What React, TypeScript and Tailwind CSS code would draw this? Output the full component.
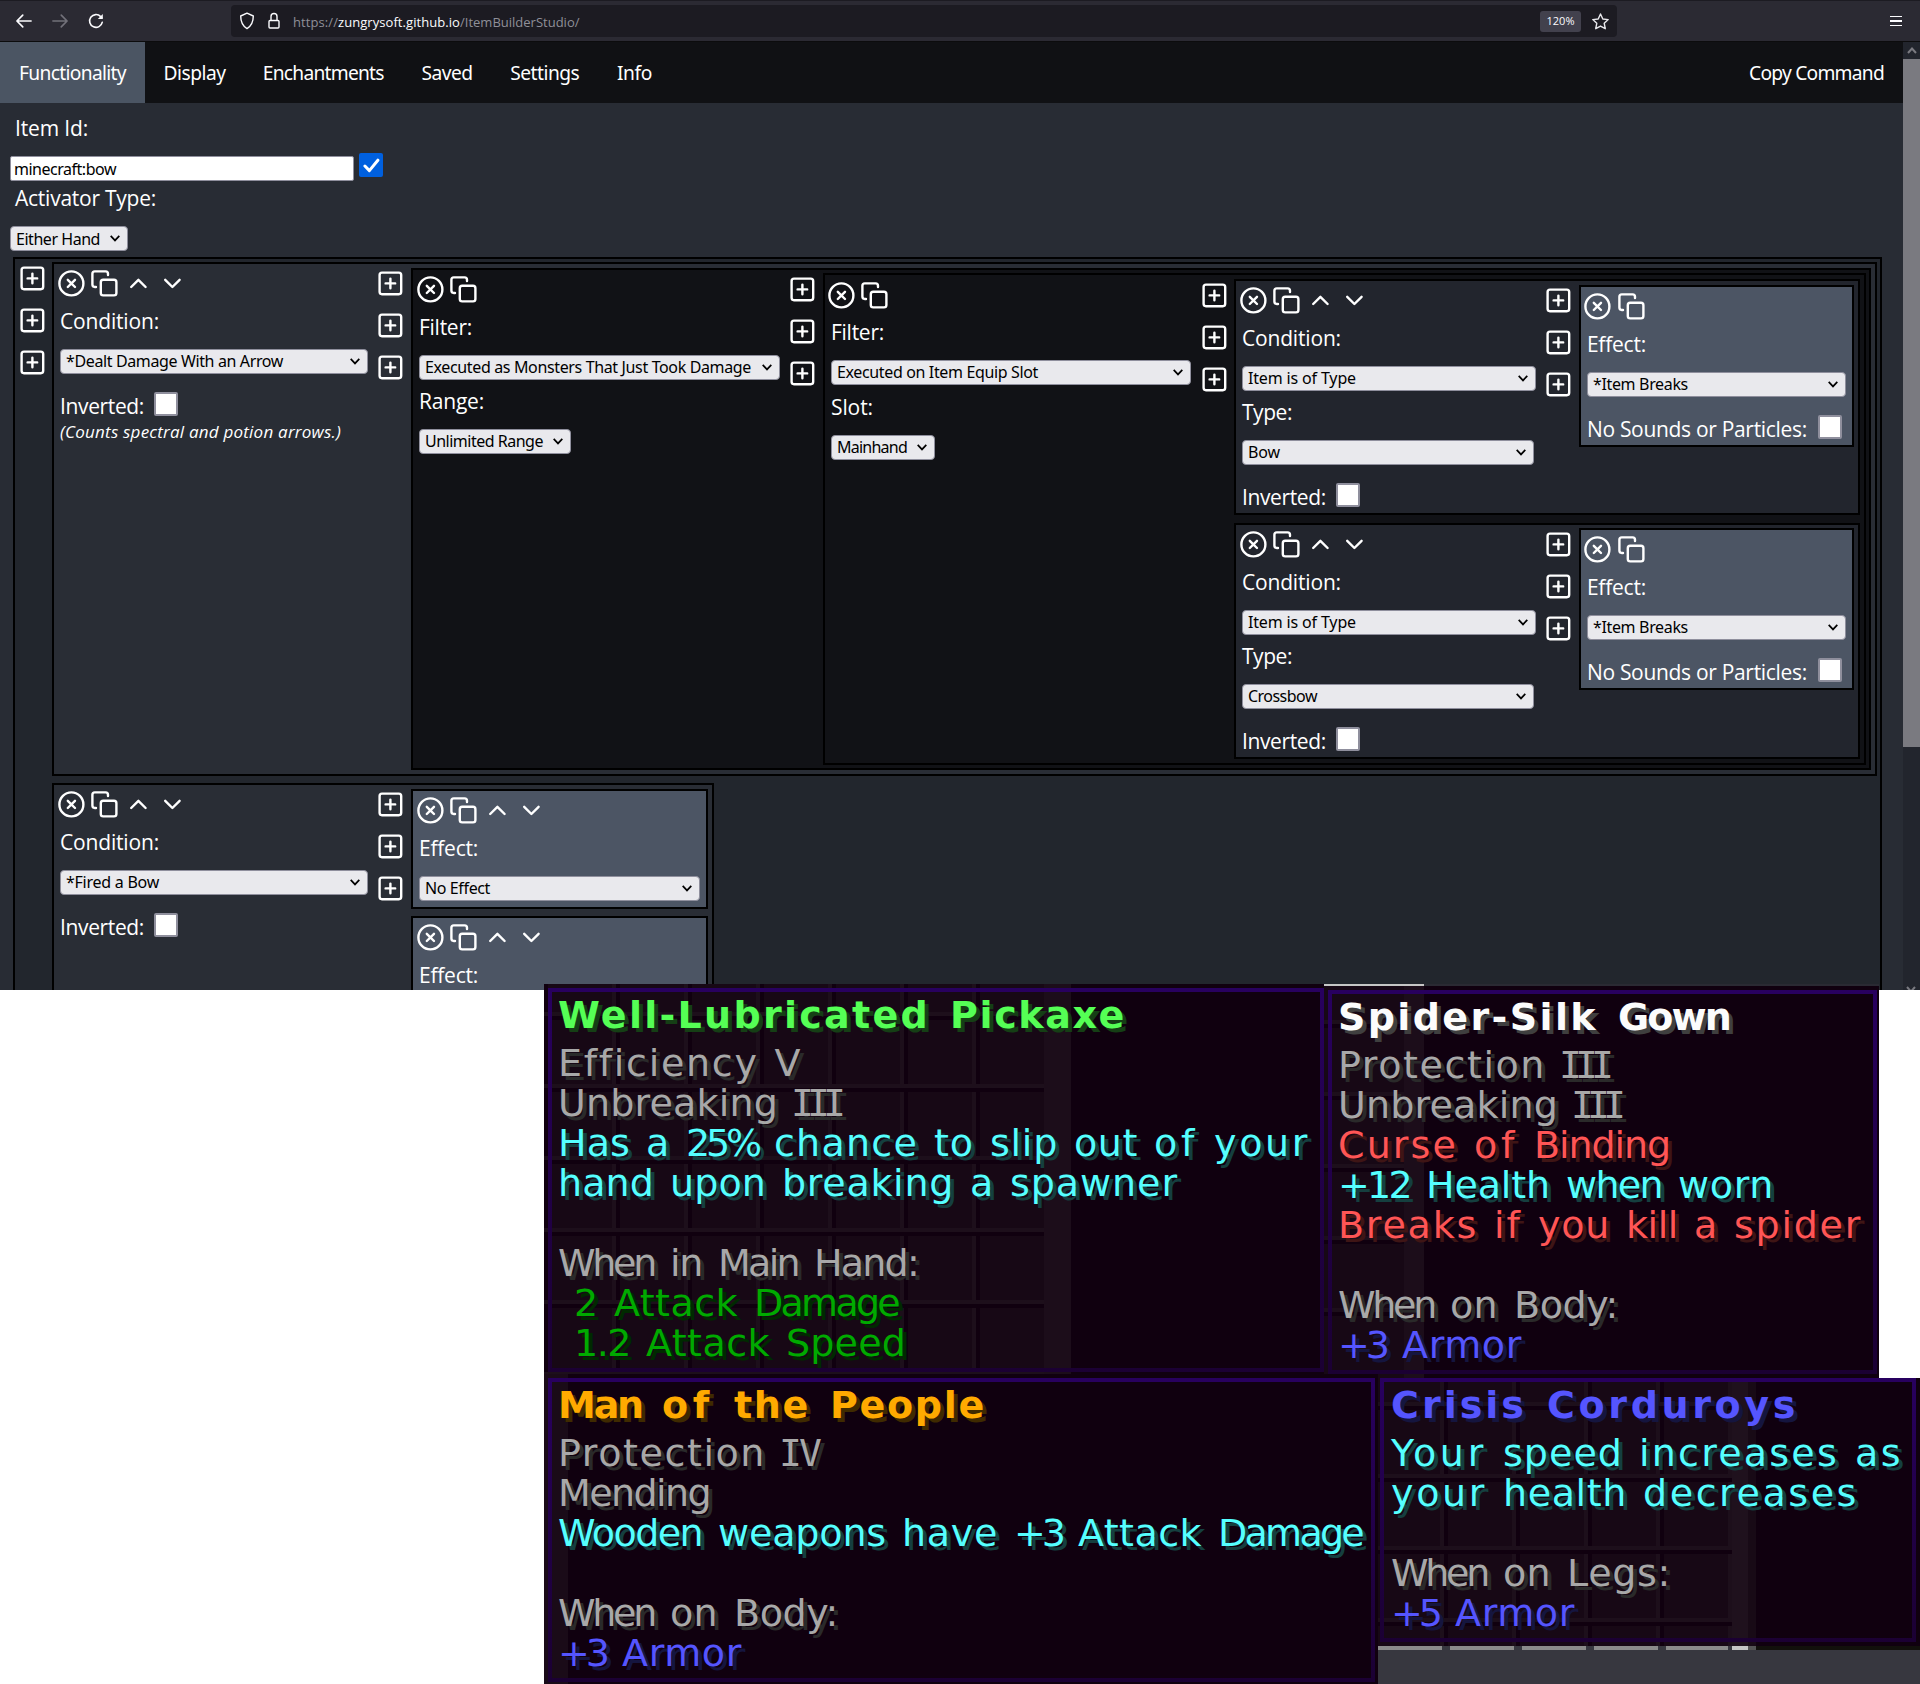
import React, { useLayoutEffect, useRef, useState } from "react";

/* Text set to an exact advance width by adjusting its tracking. */
function Fit({ w, children, className = "" }: { w: number; children: string; className?: string }) {
  const ref = useRef<HTMLSpanElement>(null);
  const [spacing, setSpacing] = useState(0);
  useLayoutEffect(() => {
    const el = ref.current;
    if (!el) return;
    const prev = el.style.letterSpacing;
    el.style.letterSpacing = "0px";
    const natural = el.getBoundingClientRect().width;
    el.style.letterSpacing = prev;
    setSpacing((w - natural) / Math.max(1, children.length));
  }, [w, children]);
  return (
    <span ref={ref} className={"inline-block shrink-0 whitespace-pre " + className} style={{ letterSpacing: spacing + "px" }}>
      {children}
    </span>
  );
}

function Icon({ children }: { children: React.ReactNode }) {
  return (
    <svg
      viewBox="0 0 24 24"
      className="block h-[28.8px] w-[28.8px] shrink-0"
      fill="none"
      stroke="#fff"
      strokeWidth="2"
      strokeLinecap="round"
      strokeLinejoin="round"
    >
      {children}
    </svg>
  );
}

const Close = () => (
  <Icon>
    <circle cx="12" cy="12" r="10" />
    <path d="M15 9l-6 6M9 9l6 6" />
  </Icon>
);
const Copy = () => (
  <Icon>
    <rect x="9" y="9" width="13" height="13" rx="2" />
    <path d="M5 15H4a2 2 0 0 1-2-2V4a2 2 0 0 1 2-2h9a2 2 0 0 1 2 2v1" />
  </Icon>
);
const Up = () => (
  <Icon>
    <path d="M18 15l-6-6-6 6" />
  </Icon>
);
const Down = () => (
  <Icon>
    <path d="M6 9l6 6 6-6" />
  </Icon>
);
const Plus = () => (
  <Icon>
    <rect x="3" y="3" width="18" height="18" rx="2" />
    <path d="M12 8v8M8 12h8" />
  </Icon>
);

function PlusColumn({ className = "pt-[4.6px]" }: { className?: string }) {
  return (
    <div className={"flex shrink-0 flex-col gap-[13.2px] " + className}>
      <Plus />
      <Plus />
      <Plus />
    </div>
  );
}

function Tools({ arrows = false, className = "pl-[2.6px] pt-[4.8px]" }: { arrows?: boolean; className?: string }) {
  return (
    <div className={"flex gap-[4.9px] " + className}>
      <Close />
      <Copy />
      {arrows && <Up />}
      {arrows && <Down />}
    </div>
  );
}

function Label({ w, children, className = "mt-[9px]" }: { w: number; children: string; className?: string }) {
  return (
    <div className={"ml-[6px] flex h-6 shrink-0 font-['Open_Sans',sans-serif] text-[21px] leading-6 text-white " + className}>
      <Fit w={w}>{children}</Fit>
    </div>
  );
}

function Select({ w, tw, children, className = "ml-[6px] mt-4" }: { w: number; tw: number; children: string; className?: string }) {
  return (
    <div
      className={
        "flex h-[25px] items-center justify-between rounded-[4px] border border-[#8f8f9d] bg-[#e9e9ed] pl-[5px] pr-[7px] font-['Noto_Sans',sans-serif] text-[16px] leading-[23px] text-black " +
        className
      }
      style={{ width: w }}
    >
      <Fit w={tw} className="pt-px">{children}</Fit>
      <svg viewBox="0 0 10 7" className="h-[7px] w-[10px] shrink-0" fill="none" stroke="#000" strokeWidth="1.7">
        <path d="M.7 .9L5 5.4 9.3 .9" />
      </svg>
    </div>
  );
}

function Check({ w, gap, children }: { w: number; gap: string; children: string }) {
  return (
    <div className={"ml-[6px] mt-[18px] flex h-6 " + gap}>
      <div className="mt-[2px] font-['Open_Sans',sans-serif] text-[21px] leading-6 text-white">
        <Fit w={w}>{children}</Fit>
      </div>
      <div className="h-6 w-6 shrink-0 rounded-[2px] border-2 border-[#8f8f9d] bg-white" />
    </div>
  );
}

function ItemCondition({ type, tw, className }: { type: string; tw: number; className: string }) {
  return (
    <div className="flex h-[236px] border-2 border-black bg-[#22252d]">
      <div className="w-[307.6px] shrink-0">
        <Tools arrows />
        <Label w={99} className="mt-[11.4px]">Condition:</Label>
        <Select w={294} tw={108}>Item is of Type</Select>
        <Label w={50}>Type:</Label>
        <Select w={292} tw={tw}>{type}</Select>
        <Check w={84} gap="gap-[10px]">Inverted:</Check>
      </div>
      <PlusColumn className="w-[35.4px] pt-[4.6px]" />
      <div className={"w-[275px] shrink-0 " + className}>
        <div className="h-[162px] border-2 border-black bg-[#4c5564]">
          <Tools className="pl-[2px] pt-[4.8px]" />
          <Label w={59} className="mt-[11.4px]">Effect:</Label>
          <Select w={259} tw={95}>*Item Breaks</Select>
          <Check w={220} gap="gap-[11px]">No Sounds or Particles:</Check>
        </div>
      </div>
    </div>
  );
}

function Nav() {
  const items: [string, number, string][] = [
    ["Functionality", 107, "w-[145px] bg-[#4b5563]"],
    ["Display", 62, "w-[99px]"],
    ["Enchantments", 121, "w-[158.5px]"],
    ["Saved", 51, "w-[89px]"],
    ["Settings", 69, "w-[106.5px]"],
    ["Info", 35, "w-[73px]"],
  ];
  return (
    <nav className="flex h-[61px] shrink-0 bg-[#101114] font-['Noto_Sans',sans-serif] text-[19.2px] text-white">
      {items.map(([t, w, c]) => (
        <div key={t} className={"flex items-center justify-center pt-[2px] " + c}>
          <Fit w={w}>{t}</Fit>
        </div>
      ))}
      <div className="ml-auto flex items-center pr-[19px] pt-[2px]">
        <Fit w={135}>Copy Command</Fit>
      </div>
    </nav>
  );
}

function BrowserBar() {
  return (
    <div className="flex h-[42px] shrink-0 items-center border-b border-t border-b-[#0c0c0d] border-t-[#1c1b22] bg-[#2b2a33]">
      <svg viewBox="0 0 24 24" className="ml-[14px] h-5 w-5" fill="none" stroke="#fbfbfe" strokeWidth="2" strokeLinecap="round" strokeLinejoin="round">
        <path d="M20.5 12H4M10.5 5L3.5 12l7 7" />
      </svg>
      <svg viewBox="0 0 24 24" className="ml-4 h-5 w-5" fill="none" stroke="#72717a" strokeWidth="2" strokeLinecap="round" strokeLinejoin="round">
        <path d="M3.5 12H20M13.5 5l7 7-7 7" />
      </svg>
      <svg viewBox="0 0 18 18" className="ml-[17px] h-[18px] w-[18px]" fill="none" stroke="#fbfbfe" strokeWidth="1.6" strokeLinecap="round">
        <path d="M15.3 10.2a6.4 6.4 0 1 1-1.6-5.6l1 1" />
        <path d="M15.8 2v5h-5z" fill="#fbfbfe" stroke="none" />
      </svg>
      <div className="ml-[126px] flex h-8 w-[1386px] items-center rounded-[4px] bg-[#1c1b22] font-['Open_Sans',sans-serif] text-[13px]">
        <svg viewBox="0 0 16 18" className="ml-[8px] h-[18px] w-4" fill="none" stroke="#fbfbfe" strokeWidth="1.4" strokeLinejoin="round">
          <path d="M8 1.2L14.3 4c0 5.500-1.600 9.800-6.300 12.600C3.300 13.800 1.700 9.500 1.700 4z" />
        </svg>
        <svg viewBox="0 0 12 18" className="ml-[13px] h-[18px] w-3" fill="none" stroke="#fbfbfe" strokeWidth="1.4" strokeLinejoin="round">
          <rect x="1" y="8.500" width="10" height="7.500" rx="1" />
          <path d="M3 8.500V4.500a3 3 0 0 1 6 0v4" />
        </svg>
        <div className="ml-[13px] flex pt-[3px] text-[#8f8f98]">
          <Fit w={45}>https://</Fit>
          <Fit w={122} className="text-[#fbfbfe]">zungrysoft.github.io</Fit>
          <Fit w={119.5}>/ItemBuilderStudio/</Fit>
        </div>
        <div className="ml-auto flex h-[21px] w-[41px] items-center justify-center rounded-[3px] bg-[#42414d] pt-px text-[11px] text-[#fbfbfe]">
          <Fit w={28}>120%</Fit>
        </div>
        <svg viewBox="0 0 24 24" className="ml-[10px] mr-[7px] h-[19px] w-[19px]" fill="none" stroke="#e8e8ec" strokeWidth="1.800" strokeLinejoin="round">
          <path d="M12 2.500l2.900 6.300 6.800.8-5 4.700 1.300 6.800L12 17.700l-6 3.400 1.300-6.800-5-4.700 6.800-.8z" />
        </svg>
      </div>
      <div className="ml-auto mr-[18px] flex w-3 flex-col gap-[3px]">
        <div className="h-[1.5px] bg-[#fbfbfe]" />
        <div className="h-[1.5px] bg-[#fbfbfe]" />
        <div className="h-[1.5px] bg-[#fbfbfe]" />
      </div>
    </div>
  );
}

function Workspace() {
  return (
    <div className="ml-[13px] mt-[6px] flex h-[760px] w-[1869px] shrink-0 border-2 border-black bg-[#22262d]">
      <PlusColumn className="w-[37px] pl-[2.600px] pt-[4.6px]" />
      <div className="flex w-[1825px] shrink-0 flex-col gap-[7px] pt-[3px]">
        <div className="flex h-[514px] shrink-0 border-2 border-black bg-[#292d35]">
          <div className="w-[321.600px] shrink-0">
            <Tools arrows />
            <Label w={99} className="mt-[11.4px]">Condition:</Label>
            <Select w={308} tw={217}>*Dealt Damage With an Arrow</Select>
            <Check w={84} gap="gap-[10px]">Inverted:</Check>
            <div className="ml-[6px] mt-[4px] h-6 font-['Open_Sans',sans-serif] text-[17px] italic leading-6 text-white">
              <Fit w={281}>(Counts spectral and potion arrows.)</Fit>
            </div>
          </div>
          <PlusColumn className="w-[35.4px] pt-[4.6px]" />
          <div className="w-[1460px] shrink-0 pt-1">
            <div className="flex h-[502px] border-2 border-black bg-[#111216]">
              <div className="w-[374.600px] shrink-0">
                <Tools />
                <Label w={53} className="mt-[11.4px]">Filter:</Label>
                <Select w={361} tw={326}>Executed as Monsters That Just Took Damage</Select>
                <Label w={65}>Range:</Label>
                <Select w={152} tw={118}>Unlimited Range</Select>
              </div>
              <PlusColumn className="w-[35.4px] pt-[4.6px]" />
              <div className="w-[1043px] shrink-0 pt-[3px]">
                <div className="flex h-[492px] border-2 border-black bg-[#111216]">
                  <div className="w-[374.600px] shrink-0">
                    <Tools className="pl-[1.8px] pt-[5.6px]" />
                    <Label w={53} className="mt-[10.6px]">Filter:</Label>
                    <Select w={360} tw={201}>Executed on Item Equip Slot</Select>
                    <Label w={42} className="mt-[10px]">Slot:</Label>
                    <Select w={104} tw={70}>Mainhand</Select>
                  </div>
                  <PlusColumn className="w-[34.4px] pt-[5.6px]" />
                  <div className="flex w-[626px] shrink-0 flex-col gap-2 pt-1">
                    <ItemCondition type="Bow" tw={32} className="pt-1" />
                    <ItemCondition type="Crossbow" tw={69} className="pt-[3px]" />
                  </div>
                </div>
              </div>
            </div>
          </div>
        </div>
        <div className="flex h-[400px] w-[662px] shrink-0 border-2 border-black bg-[#292d35]">
          <div className="w-[321.600px] shrink-0">
            <Tools arrows />
            <Label w={99} className="mt-[11.4px]">Condition:</Label>
            <Select w={308} tw={93}>*Fired a Bow</Select>
            <Check w={84} gap="gap-[10px]">Inverted:</Check>
          </div>
          <PlusColumn className="w-[35.4px] pt-[4.6px]" />
          <div className="flex w-[297px] shrink-0 flex-col gap-[7px] pt-1">
            <div className="h-[120px] border-2 border-black bg-[#4c5564]">
              <Tools arrows />
              <Label w={59} className="mt-[11.4px]">Effect:</Label>
              <Select w={281} tw={65}>No Effect</Select>
            </div>
            <div className="h-[120px] border-2 border-black bg-[#4c5564]">
              <Tools arrows />
              <Label w={59} className="mt-[11.4px]">Effect:</Label>
            </div>
          </div>
        </div>
      </div>
    </div>
  );
}

/* Glyph advances of the game's bitmap font, in font pixels. */
const ADVANCE: Record<string, number> = { i: 2, l: 3, t: 4, f: 5, k: 5, I: 4, " ": 4, ".": 2, ":": 2 };
const PX = 4;

function GameLine({ text, tone, bold = false }: { text: string; tone: string; bold?: boolean }) {
  const parts = text.split(/( +)/).filter((p) => p.length > 0);
  return (
    <div
      className={
        "flex h-10 whitespace-pre font-['DejaVu_Sans',sans-serif] leading-10 " +
        (bold ? "mb-2 text-[38px] font-bold " : "text-[38px] ") +
        tone
      }
    >
      {parts.map((p, i) => {
        const w = [...p].reduce((s, ch) => s + ((ADVANCE[ch] ?? 6) + (bold ? 1 : 0)) * PX, 0);
        return (
          <Fit key={i} w={w} className={/^I+V?$/.test(p) ? "-ml-[3px] mr-[3px] font-['DejaVu_Sans_Mono',monospace]" : ""}>
            {p}
          </Fit>
        );
      })}
    </div>
  );
}

const TONE = {
  green: "text-[#55ff55] [text-shadow:4px_4px_0_#153f15]",
  gray: "text-[#a8a8a8] [text-shadow:4px_4px_0_#2a2a2a]",
  aqua: "text-[#55ffff] [text-shadow:4px_4px_0_#153f3f]",
  dark: "text-[#00aa00] [text-shadow:4px_4px_0_#002a00]",
  red: "text-[#ff5555] [text-shadow:4px_4px_0_#3f1515]",
  blue: "text-[#5555ff] [text-shadow:4px_4px_0_#15153f]",
  gold: "text-[#ffaa00] [text-shadow:4px_4px_0_#3f2a00]",
  white: "text-[#fcfcfc] [text-shadow:4px_4px_0_#3f3f3f]",
};
type Line = [string, keyof typeof TONE];

function Tooltip({
  lines,
  frame,
  backdrop,
  origin = "left-[14px] top-[11px]",
}: {
  lines: Line[];
  frame: string;
  backdrop: React.ReactNode;
  origin?: string;
}) {
  return (
    <div className={"relative shrink-0 overflow-hidden bg-[#10000f] " + frame}>
      {backdrop}
      <div className="relative h-full bg-linear-to-b from-[#28005f] to-[#1b0033] p-1 [mask:linear-gradient(#000_0_0)_top/100%_4px_no-repeat,linear-gradient(#000_0_0)_bottom/100%_4px_no-repeat,linear-gradient(#000_0_0)_left/4px_100%_no-repeat,linear-gradient(#000_0_0)_right/4px_100%_no-repeat]" />
      <div className={"absolute " + origin}>
        {lines.map(([t, c], i) => (
          <GameLine key={i} text={t} tone={TONE[c]} bold={i === 0} />
        ))}
      </div>
    </div>
  );
}

export default function App() {
  return (
    <div className="h-[1684px] w-[1920px] overflow-hidden bg-white">
      <div className="flex h-[990px] flex-col overflow-hidden bg-[#282c34]">
        <BrowserBar />
        <div className="flex h-[948px] shrink-0">
          <main className="flex w-[1903px] shrink-0 flex-col overflow-hidden">
            <Nav />
            <Label w={73} className="ml-[15px] mt-[13px]">Item Id:</Label>
            <div className="ml-[10px] mt-[13px] flex h-7 shrink-0 items-start gap-[5px]">
              <div className="mt-[3px] flex h-[25px] w-[344px] items-center rounded-[2px] border border-[#8f8f9d] bg-white pl-[3px] pt-px font-['Noto_Sans',sans-serif] text-[16px] leading-[23px] text-black">
                <Fit w={102}>minecraft:bow</Fit>
              </div>
              <div className="flex h-6 w-6 items-center justify-center rounded-[2px] bg-[#0060df]">
                <svg viewBox="0 0 16 14" className="h-[15px] w-[17px]" fill="none" stroke="#fff" strokeWidth="2.800" strokeLinecap="round" strokeLinejoin="round">
                  <path d="M1.800 7.500L6 11.800 14 2" />
                </svg>
              </div>
            </div>
            <Label w={141} className="ml-[15px] mt-[5px]">Activator Type:</Label>
            <Select w={118} tw={84} className="ml-[10px] mt-4 shrink-0">Either Hand</Select>
            <Workspace />
          </main>
          <aside className="flex w-[17px] flex-col bg-[#22252d]">
            <div className="flex h-[17px] items-center justify-center">
              <svg viewBox="0 0 10 7" className="h-[7px] w-[10px]" fill="none" stroke="#7a7a80" strokeWidth="2">
                <path d="M1 6l4-4.500L9 6" />
              </svg>
            </div>
            <div className="h-[688px] bg-[#7a7a80]" />
            <svg viewBox="0 0 10 7" className="ml-[3px] mt-auto -mb-[3px] h-[7px] w-[10px]" fill="none" stroke="#7a7a80" strokeWidth="2">
              <path d="M1 1l4 4.500L9 1" />
            </svg>
          </aside>
        </div>
      </div>

      <section className="relative -mt-[6px] ml-[544px] flex h-[392px] w-[1376px] items-start">
        <Tooltip
          frame="w-[780px] h-[392px] pl-1 pt-1 pb-1"
          backdrop={
            <div className="absolute inset-y-0 left-0 flex">
              <div className="w-[500px] bg-[#170815] [background-image:linear-gradient(90deg,#1d0f1b_4px,#10000f_4px_8px,transparent_8px)] [background-position:-4px_0] [background-size:72px_100%]">
                <div className="h-full [background-image:linear-gradient(#1d0f1b_4px,#10000f_4px_8px,transparent_8px)] [background-position:0_28px] [background-size:100%_72px]" />
              </div>
              <div className="w-[27px] bg-[#1c0d1a]" />
            </div>
          }
          lines={[
            ["Well-Lubricated Pickaxe", "green"],
            ["Efficiency V", "gray"],
            ["Unbreaking III", "gray"],
            ["Has a 25% chance to slip out of your", "aqua"],
            ["hand upon breaking a spawner", "aqua"],
            [" ", "gray"],
            ["When in Main Hand:", "gray"],
            [" 2 Attack Damage", "dark"],
            [" 1.2 Attack Speed", "dark"],
          ]}
        />
        <div className="w-[555px] shrink-0">
          <div className="flex h-[2px] bg-[#2a2a33]">
            <div className="w-[100px] bg-[#c6c6c6]" />
          </div>
          <Tooltip
            frame="w-[555px] h-[392px] pl-1 pr-[2px] pt-1 pb-1"
            backdrop={
              <div className="absolute inset-y-0 left-0 flex">
                <div className="w-[80px] bg-[#170815] [background-image:linear-gradient(#1d0f1b_4px,#10000f_4px_8px,transparent_8px)] [background-position:0_34px] [background-size:100%_72px]" />
                <div className="w-[20px] bg-[#1c0d1a]" />
              </div>
            }
            lines={[
              ["Spider-Silk Gown", "white"],
              ["Protection III", "gray"],
              ["Unbreaking III", "gray"],
              ["Curse of Binding", "red"],
              ["+12 Health when worn", "aqua"],
              ["Breaks if you kill a spider", "red"],
              [" ", "gray"],
              ["When on Body:", "gray"],
              ["+3 Armor", "blue"],
            ]}
          />
        </div>
      </section>

      <section className="relative -mt-[2px] ml-[544px] flex h-[310px] w-[1376px]">
        <Tooltip
          frame="w-[834px] h-[310px] px-1 pt-1 pb-[2px] pr-[3px]"
          backdrop={<div className="absolute inset-y-0 left-0 w-6 bg-[#1a0b18]" />}
          lines={[
            ["Man of the People", "gold"],
            ["Protection IV", "gray"],
            ["Mending", "gray"],
            ["Wooden weapons have +3 Attack Damage", "aqua"],
            [" ", "gray"],
            ["When on Body:", "gray"],
            ["+3 Armor", "blue"],
          ]}
        />
        <div className="mt-1 flex w-[542px] flex-col bg-[#37373f]">
          <Tooltip
            frame="w-[542px] h-[268px] pb-1 pl-[2px] pr-1"
            origin="left-[13px] top-[7px]"
            backdrop={
              <div className="absolute inset-y-0 left-0 flex">
                <div className="w-[354px] bg-[#170815] [background-image:linear-gradient(90deg,#1d0f1b_4px,#10000f_4px_8px,transparent_8px)] [background-position:62px_0] [background-size:72px_100%]">
                  <div className="h-full [background-image:linear-gradient(#1d0f1b_4px,#10000f_4px_8px,transparent_8px)] [background-position:0_24px] [background-size:100%_72px]" />
                </div>
                <div className="w-[16px] bg-[#1f111d]" />
                <div className="w-[8px] bg-[#180a16]" />
              </div>
            }
            lines={[
              ["Crisis Corduroys", "blue"],
              ["Your speed increases as", "aqua"],
              ["your health decreases", "aqua"],
              [" ", "gray"],
              ["When on Legs:", "gray"],
              ["+5 Armor", "blue"],
            ]}
          />
          <div className="flex h-1 gap-2">
            <div className="w-[64px] bg-[#8b8b8b]" />
            <div className="w-[64px] bg-[#8b8b8b]" />
            <div className="w-[64px] bg-[#8b8b8b]" />
            <div className="w-[64px] bg-[#8b8b8b]" />
            <div className="flex">
              <div className="w-[62px] bg-[#8b8b8b]" />
              <div className="ml-1 w-4 bg-[#c6c6c6]" />
            </div>
            <div className="-ml-2 flex grow">
              <div className="w-2 bg-[#555555]" />
              <div className="grow bg-[#12100c]" />
            </div>
          </div>
        </div>
      </section>
    </div>
  );
}
